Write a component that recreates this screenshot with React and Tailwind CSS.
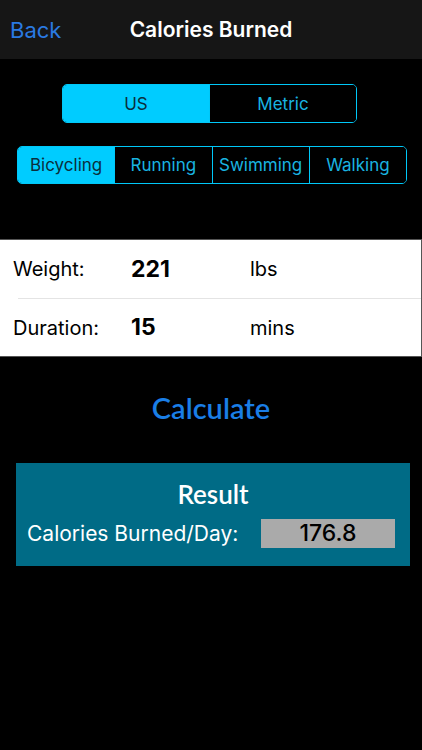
import { useState } from 'react'

const body = { fontFamily: 'Inter, "Liberation Sans", sans-serif' }
const futura = { fontFamily: 'Lato, "Noto Sans", sans-serif' }

function Segmented({ items, value, onChange, className, itemClass }) {
  return (
    <div className={`flex border border-[#00c8f8] rounded-[5px] overflow-hidden ${className}`}>
      {items.map((it, i) => (
        <button
          key={it}
          onClick={() => onChange(it)}
          className={`flex-1 flex items-center justify-center pt-[2px] ${itemClass} ${i > 0 ? 'border-l border-[#00c8f8]' : ''} ${
            it === value ? 'bg-[#00ccff] text-[#0b2f3c]' : 'bg-black text-[#19b4e0]'
          }`}
        >
          {it}
        </button>
      ))}
    </div>
  )
}

export default function App() {
  const [units, setUnits] = useState('US')
  const [activity, setActivity] = useState('Bicycling')

  return (
    <div className="w-[422px] h-[750px] bg-black overflow-hidden" style={body}>
      <div className="h-[59px] bg-[#161616] relative flex items-center justify-center">
        <button className="absolute left-[10px] top-[14px] text-[22px] text-[#2a7ae2]">Back</button>
        <h1 className="text-[21px] font-semibold text-white">Calories Burned</h1>
      </div>

      <div className="flex mt-[25px] pl-[62px]">
        <Segmented
          items={['US', 'Metric']}
          value={units}
          onChange={setUnits}
          className="w-[295px] h-[39px]"
          itemClass="text-[17px]"
        />
      </div>

      <div className="flex mt-[23px] pl-[17px]">
        <Segmented
          items={['Bicycling', 'Running', 'Swimming', 'Walking']}
          value={activity}
          onChange={setActivity}
          className="w-[390px] h-[38px]"
          itemClass="text-[17px]"
        />
      </div>

      <div className="mt-[55px] bg-white border-y border-[#555] border-r">
        <div className="h-[58px] flex items-center">
          <span className="w-[131px] pl-[13px] text-[20px] text-black">Weight:</span>
          <span className="w-[119px] text-[23px] font-bold text-black">221</span>
          <span className="text-[20px] text-black">lbs</span>
        </div>
        <div className="ml-[18px] border-t border-[#e4e4e4]" />
        <div className="h-[57px] flex items-center">
          <span className="w-[131px] pl-[13px] text-[20px] text-black">Duration:</span>
          <span className="w-[119px] text-[23px] font-bold text-black">15</span>
          <span className="text-[20px] text-black">mins</span>
        </div>
      </div>

      <div className="flex justify-center mt-[29px]">
        <button className="text-[29px] font-semibold text-[#1a7ee6]" style={futura}>Calculate</button>
      </div>

      <div className="ml-[16px] mr-[12px] mt-[33px] h-[103px] bg-[#006b86] flex flex-col">
        <div className="text-center text-white text-[26px] font-semibold mt-[12px]" style={futura}>Result</div>
        <div className="flex items-center mt-[4px] pl-[11px] pr-[15px]">
          <span className="flex-1 text-[21px] text-white">Calories Burned/Day:</span>
          <span className="w-[134px] h-[29px] bg-[#aaaaaa] flex items-center justify-center text-[23px] font-medium text-black">
            176.8
          </span>
        </div>
      </div>
    </div>
  )
}
